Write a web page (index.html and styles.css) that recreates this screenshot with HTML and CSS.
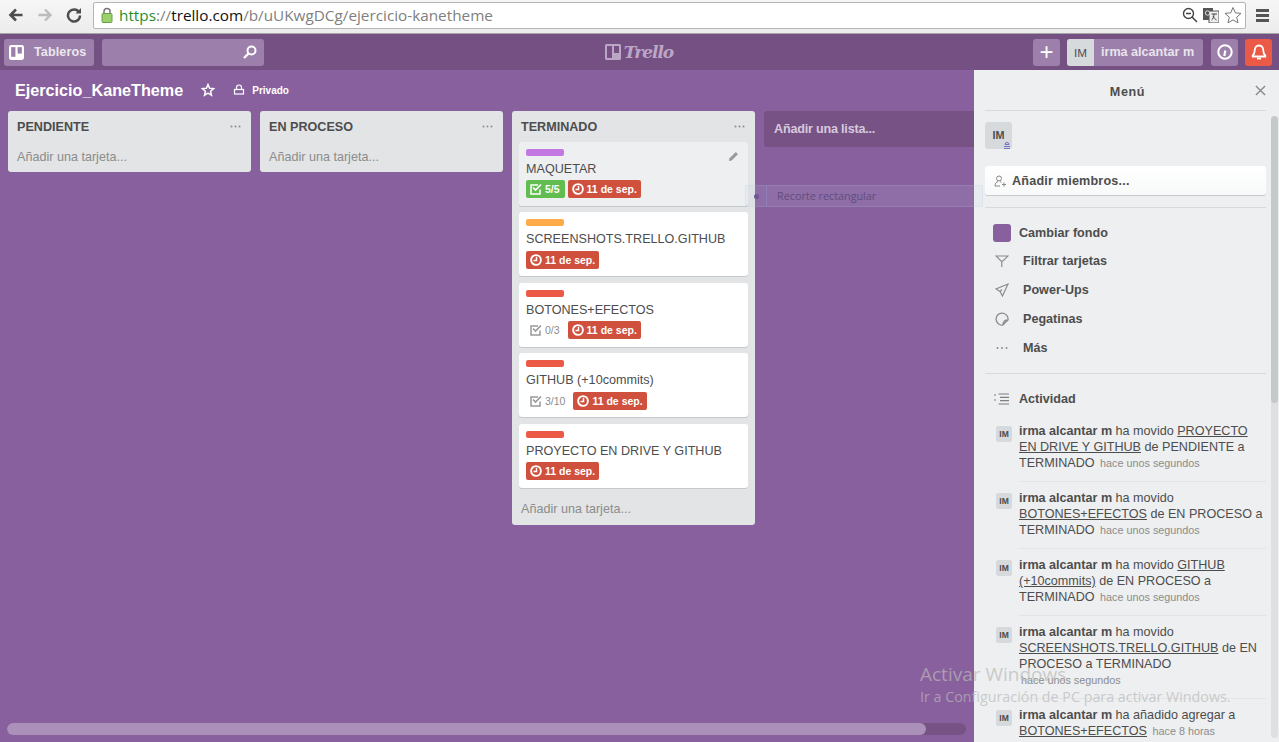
FILE: index.html
```html
<!DOCTYPE html>
<html lang="en">
<head>
  <meta charset="UTF-8">
  <title>Ejercicio_KaneTheme en Trello</title>
  <link rel="stylesheet" href="styles.css">
</head>
<body>
  <div class="browser-bar">
    <svg class="nav-icon" viewBox="0 0 16 16"><path d="M14.5 8H3M8 2.5 2.5 8 8 13.5" fill="none" stroke="#4d4d4d" stroke-width="2.6"/></svg>
    <svg class="nav-icon" viewBox="0 0 16 16"><path d="M1.5 8H13M8 2.5 13.5 8 8 13.5" fill="none" stroke="#bcbcbc" stroke-width="2.4"/></svg>
    <svg class="nav-icon" viewBox="0 0 16 16"><path d="M13 5.2A6 6 0 1 0 14 8.5" fill="none" stroke="#4d4d4d" stroke-width="2.5"/><path d="M9.5 6.5H15V1z" fill="#4d4d4d"/></svg>
    <div class="address">
      <svg class="lock" viewBox="0 0 12 16"><path d="M3 7V4.5a3 3 0 0 1 6 0V7" fill="none" stroke="#777" stroke-width="1.5"/><rect x="1" y="6.5" width="10" height="9" rx="1" fill="#9bd169" stroke="#6c9c45"/></svg>
      <span class="url"><span class="url-scheme">https</span><span class="url-dim">://</span>trello.com<span class="url-dim">/b/uUKwgDCg/ejercicio-kanetheme</span></span>
      <svg class="addr-icon" viewBox="0 0 16 16"><circle cx="6.5" cy="6.5" r="5" fill="none" stroke="#444" stroke-width="1.4"/><path d="M4 6.5h5M10 10l5 5" fill="none" stroke="#444" stroke-width="1.5"/></svg>
      <svg class="addr-icon" viewBox="0 0 16 16"><rect x="0" y="1" width="10" height="12" fill="#555"/><rect x="6" y="4" width="10" height="12" fill="#eee" stroke="#555"/><path d="M8.5 7h5.500M11 7c0 3-1 5-2.500 6M10 9c1 2 2 3 3.500 4" fill="none" stroke="#444"/><circle cx="4.5" cy="6" r="2.2" fill="none" stroke="#ddd"/></svg>
      <svg class="addr-star" viewBox="0 0 18 18"><path d="M9 1.5 11.3 6.8 17 7.400 12.700 11.200 14 16.800 9 13.900 4 16.800 5.300 11.200 1 7.400 6.700 6.800z" fill="#fff" stroke="#777"/></svg>
    </div>
    <div class="hamburger"><span></span><span></span><span></span></div>
  </div>

  <header class="app-header">
    <button class="head-btn boards-btn">
      <svg class="boards-icon" viewBox="0 0 14 14"><rect width="14" height="14" rx="2" fill="#fff"/><rect x="2" y="2" width="4" height="9" fill="#9c80ab"/><rect x="8" y="2" width="4" height="6" fill="#9c80ab"/></svg>
      Tableros
    </button>
    <div class="search">
      <svg class="search-icon" viewBox="0 0 14 14"><circle cx="8.5" cy="5.5" r="4" fill="none" stroke="#fff" stroke-width="2"/><path d="M5.5 8.5 1 13" stroke="#fff" stroke-width="2.4"/></svg>
    </div>
    <div class="logo">
      <svg class="logo-icon" viewBox="0 0 16 16"><rect width="16" height="16" rx="1.5" fill="#bba6c6"/><rect x="2" y="2" width="5" height="12" fill="#755083"/><rect x="9" y="2" width="5" height="7" fill="#755083"/></svg>
      <span class="logo-text">Trello</span>
    </div>
    <button class="head-btn square-btn plus-btn">+</button>
    <div class="head-btn user-btn"><span class="user-avatar">IM</span><span class="user-name">irma alcantar m</span></div>
    <button class="head-btn square-btn">
      <svg class="head-icon" viewBox="0 0 16 16"><circle cx="8" cy="8" r="6.7" fill="none" stroke="#fff" stroke-width="2"/><path d="M8.800 3.800h.1M8.300 6.500 7.300 12" stroke="#fff" stroke-width="2.2" fill="none"/></svg>
    </button>
    <button class="head-btn square-btn bell-btn">
      <svg class="head-icon" viewBox="0 0 16 16"><path d="M8 1.500c-3 0-4.300 2.200-4.300 5 0 2.500-.7 3.700-2 5v1h12.600v-1c-1.300-1.300-2-2.500-2-5 0-2.800-1.300-5-4.300-5z" fill="none" stroke="#fff" stroke-width="1.8"/><path d="M6 14.500h4" stroke="#fff" stroke-width="1.8"/></svg>
    </button>
  </header>

  <div class="workspace">
    <main class="board">
      <div class="board-head">
        <h1 class="board-title">Ejercicio_KaneTheme</h1>
        <svg class="star-icon" viewBox="0 0 14 14"><path d="M7 1.500 8.600 5.200 12.700 5.600 9.600 8.300 10.500 12.300 7 10.200 3.500 12.300 4.400 8.300 1.300 5.600 5.400 5.200z" fill="none" stroke="#fff" stroke-width="1.5"/></svg>
        <svg class="lock-icon" viewBox="0 0 12 12"><path d="M3.500 5V3.500a2.500 2.500 0 0 1 5 0V5" fill="none" stroke="#fff" stroke-width="1.2"/><rect x="1.5" y="5.5" width="9" height="4.5" fill="none" stroke="#fff" stroke-width="1.2"/></svg>
        <span class="privacy">Privado</span>
      </div>

      <div class="lists">
        <section class="list">
          <div class="list-head"><h2>PENDIENTE</h2><svg class="dots" viewBox="0 0 11 3"><circle cx="1.5" cy="1.5" r="1"/><circle cx="5.5" cy="1.5" r="1"/><circle cx="9.5" cy="1.5" r="1"/></svg></div>
          <div class="add-card">Añadir una tarjeta...</div>
        </section>

        <section class="list">
          <div class="list-head"><h2>EN PROCESO</h2><svg class="dots" viewBox="0 0 11 3"><circle cx="1.5" cy="1.5" r="1"/><circle cx="5.5" cy="1.5" r="1"/><circle cx="9.5" cy="1.5" r="1"/></svg></div>
          <div class="add-card">Añadir una tarjeta...</div>
        </section>

        <section class="list">
          <div class="list-head"><h2>TERMINADO</h2><svg class="dots" viewBox="0 0 11 3"><circle cx="1.5" cy="1.5" r="1"/><circle cx="5.5" cy="1.5" r="1"/><circle cx="9.5" cy="1.5" r="1"/></svg></div>

          <article class="card card-hover">
            <div class="label label-purple"></div>
            <svg class="pencil" viewBox="0 0 12 12"><path d="M1 11l.7-3L8.500 1.200l2.300 2.300L4 10.300z" fill="#999"/></svg>
            <div class="card-title">MAQUETAR</div>
            <div class="badges">
              <span class="badge badge-green"><svg class="badge-icon" viewBox="0 0 12 12"><path d="M10 6.500V11H1V2h7" fill="none" stroke="#fff" stroke-width="1.5"/><path d="M3 4.500l2.500 2.500L11 1.500" fill="none" stroke="#fff" stroke-width="1.7"/></svg>5/5</span>
              <span class="badge badge-red"><svg class="badge-icon" viewBox="0 0 12 12"><circle cx="6" cy="6" r="4.900" fill="none" stroke="#fff" stroke-width="1.900"/><path d="M6.500 2.800V6.500H3.500" fill="none" stroke="#fff" stroke-width="1.500"/></svg>11 de sep.</span>
            </div>
          </article>

          <article class="card">
            <div class="label label-orange"></div>
            <div class="card-title">SCREENSHOTS.TRELLO.GITHUB</div>
            <div class="badges">
              <span class="badge badge-red"><svg class="badge-icon" viewBox="0 0 12 12"><circle cx="6" cy="6" r="4.900" fill="none" stroke="#fff" stroke-width="1.900"/><path d="M6.500 2.800V6.500H3.500" fill="none" stroke="#fff" stroke-width="1.500"/></svg>11 de sep.</span>
            </div>
          </article>

          <article class="card">
            <div class="label label-red"></div>
            <div class="card-title">BOTONES+EFECTOS</div>
            <div class="badges">
              <span class="badge badge-plain"><svg class="badge-icon" viewBox="0 0 12 12"><path d="M10 6.500V11H1V2h7" fill="none" stroke="#999" stroke-width="1.5"/><path d="M3 4.500l2.500 2.500L11 1.500" fill="none" stroke="#999" stroke-width="1.7"/></svg>0/3</span>
              <span class="badge badge-red"><svg class="badge-icon" viewBox="0 0 12 12"><circle cx="6" cy="6" r="4.900" fill="none" stroke="#fff" stroke-width="1.900"/><path d="M6.500 2.800V6.500H3.500" fill="none" stroke="#fff" stroke-width="1.500"/></svg>11 de sep.</span>
            </div>
          </article>

          <article class="card">
            <div class="label label-red"></div>
            <div class="card-title">GITHUB (+10commits)</div>
            <div class="badges">
              <span class="badge badge-plain"><svg class="badge-icon" viewBox="0 0 12 12"><path d="M10 6.500V11H1V2h7" fill="none" stroke="#999" stroke-width="1.5"/><path d="M3 4.500l2.500 2.500L11 1.500" fill="none" stroke="#999" stroke-width="1.7"/></svg>3/10</span>
              <span class="badge badge-red"><svg class="badge-icon" viewBox="0 0 12 12"><circle cx="6" cy="6" r="4.900" fill="none" stroke="#fff" stroke-width="1.900"/><path d="M6.500 2.800V6.500H3.500" fill="none" stroke="#fff" stroke-width="1.500"/></svg>11 de sep.</span>
            </div>
          </article>

          <article class="card">
            <div class="label label-red"></div>
            <div class="card-title">PROYECTO EN DRIVE Y GITHUB</div>
            <div class="badges">
              <span class="badge badge-red"><svg class="badge-icon" viewBox="0 0 12 12"><circle cx="6" cy="6" r="4.900" fill="none" stroke="#fff" stroke-width="1.900"/><path d="M6.500 2.800V6.500H3.500" fill="none" stroke="#fff" stroke-width="1.500"/></svg>11 de sep.</span>
            </div>
          </article>

          <div class="add-card">Añadir una tarjeta...</div>
        </section>

        <div class="add-list">Añadir una lista...</div>
      </div>

      <div class="board-scroll"><div class="board-scroll-thumb"></div></div>
    </main>

    <aside class="menu">
      <div class="menu-head">
        <span class="menu-title">Menú</span>
        <svg class="menu-close" viewBox="0 0 12 12"><path d="M1 1l10 10M11 1 1 11" stroke="#8c8c8c" stroke-width="1.6"/></svg>
      </div>
      <div class="menu-scrollbar"><div class="menu-scrollbar-thumb"></div></div>

      <div class="member">
        IM
        <svg class="member-mark" viewBox="0 0 8 8"><path d="M2 3.500a2 2 0 0 1 4 0zM1 5.500h6M1 7.500h6" fill="none" stroke="#6f73c9"/></svg>
      </div>
      <button class="add-members">
        <svg class="add-members-icon" viewBox="0 0 12 12"><circle cx="5" cy="3.500" r="2.500" fill="none" stroke="#888"/><path d="M1 11c0-3 1.500-4 3-4.500M6 6.500c.5.200 1 .5 1.500 1M1 11h5M8 9.500h4M10 7.500v4" fill="none" stroke="#888"/></svg>
        Añadir miembros...
      </button>

      <nav class="menu-nav">
        <div class="menu-row menu-row-bg"><span class="swatch"></span>Cambiar fondo</div>
        <div class="menu-row"><svg class="menu-icon" viewBox="0 0 14 14"><path d="M1 2h12L8 7H6zM6.800 7v6" fill="none" stroke="#8c8c8c" stroke-width="1.2"/></svg>Filtrar tarjetas</div>
        <div class="menu-row"><svg class="menu-icon" viewBox="0 0 14 14"><path d="M13 1 1 6l4 2.500L7.500 13zM5 8.500l2-2" fill="none" stroke="#8c8c8c" stroke-width="1.2"/></svg>Power-Ups</div>
        <div class="menu-row"><svg class="menu-icon" viewBox="0 0 14 14"><path d="M8 13a6 6 0 1 1 5-5zM8 13c0-3 2-5 5-5" fill="none" stroke="#8c8c8c" stroke-width="1.3"/></svg>Pegatinas</div>
        <div class="menu-row"><svg class="menu-icon" viewBox="0 0 14 14"><circle cx="2.500" cy="7" r="1" fill="#8c8c8c"/><circle cx="7" cy="7" r="1" fill="#8c8c8c"/><circle cx="11.500" cy="7" r="1" fill="#8c8c8c"/></svg>Más</div>
      </nav>

      <div class="activity-head">
        <svg class="activity-icon" viewBox="0 0 15 12"><path d="M4.500 1H15M6 4.300h9M6 7.700h9M4.500 11H15M0 2h2M0 7h2" stroke="#7f7f7f" stroke-width="1.2"/></svg>
        Actividad
      </div>

      <div class="activity">
        <div class="action">
          <span class="action-avatar">IM</span>
          <p class="action-text"><b>irma alcantar m</b> ha movido <a>PROYECTO EN DRIVE Y GITHUB</a> de PENDIENTE a TERMINADO <small>hace unos segundos</small></p>
        </div>
        <div class="action">
          <span class="action-avatar">IM</span>
          <p class="action-text"><b>irma alcantar m</b> ha movido <a>BOTONES+EFECTOS</a> de EN PROCESO a TERMINADO <small>hace unos segundos</small></p>
        </div>
        <div class="action">
          <span class="action-avatar">IM</span>
          <p class="action-text"><b>irma alcantar m</b> ha movido <a>GITHUB (+10commits)</a> de EN PROCESO a TERMINADO <small>hace unos segundos</small></p>
        </div>
        <div class="action">
          <span class="action-avatar">IM</span>
          <p class="action-text"><b>irma alcantar m</b> ha movido <a>SCREENSHOTS.TRELLO.GITHUB</a> de EN PROCESO a TERMINADO <small>hace unos segundos</small></p>
        </div>
        <div class="action">
          <span class="action-avatar">IM</span>
          <p class="action-text"><b>irma alcantar m</b> ha añadido agregar a <a>BOTONES+EFECTOS</a> <small>hace 8 horas</small></p>
        </div>
      </div>
    </aside>
  </div>

  <div class="snip-tip">
    <span class="snip-dot"><span></span></span>
    <span class="snip-text">Recorte rectangular</span>
  </div>

  <div class="watermark">
    <div class="watermark-big">Activar Windows</div>
    <div class="watermark-small">Ir a Configuración de PC para activar Windows.</div>
  </div>
</body>
</html>
```

FILE: styles.css
```css
* {
  box-sizing: border-box;
}
html, body {
  height: 100%;
}
body {
  margin: 0;
  display: flex;
  flex-direction: column;
  overflow: hidden;
  font-family: "Liberation Sans", Arial, sans-serif;
  font-size: 12.6px;
  line-height: 16px;
  color: #4d4d4d;
  background-color: #89609e;
}
button {
  font-family: inherit;
  border: none;
  padding: 0;
}
h1, h2, p {
  margin: 0;
}

/* browser chrome */
.browser-bar {
  flex: 0 0 34px;
  display: flex;
  align-items: center;
  padding: 0 10px 3px 8px;
  background: linear-gradient(#f6f6f6, #ececec);
  border-bottom: 1px solid #a5a5a5;
}
.nav-icon {
  width: 16px;
  height: 16px;
  margin-right: 13px;
}
.address {
  flex: 1;
  height: 27px;
  margin-left: -2px;
  display: flex;
  align-items: center;
  padding: 0 3px 0 7px;
  background-color: white;
  border: 1px solid #b4b4b4;
  border-radius: 2px;
}
.lock {
  width: 12px;
  height: 16px;
  margin-right: 6px;
}
.url {
  flex: 1;
  font-family: "Open Sans", sans-serif;
  font-size: 15.3px;
  color: #111;
}
.url-scheme {
  color: #1e8f2d;
}
.url-dim {
  color: #808080;
}
.addr-icon {
  width: 16px;
  height: 16px;
  margin-right: 5px;
}
.addr-star {
  width: 18px;
  height: 18px;
}
.hamburger {
  width: 13px;
  margin-left: 10px;
  display: flex;
  flex-direction: column;
  gap: 2px;
}
.hamburger span {
  height: 3px;
  background-color: #555;
}

/* app header */
.app-header {
  flex: 0 0 36px;
  display: flex;
  align-items: center;
  padding: 0 7px 0 4px;
  background-color: #755083;
}
.head-btn {
  height: 27px;
  display: flex;
  align-items: center;
  justify-content: center;
  color: white;
  font-weight: bold;
  font-size: 12.6px;
  background-color: #9c80ab;
  border-radius: 3px;
}
.boards-btn {
  width: 90px;
  justify-content: flex-start;
  gap: 10px;
  padding-left: 5px;
  letter-spacing: 0.1px;
  color: #ece6ef;
}
.boards-icon {
  width: 15px;
  height: 15px;
}
.search {
  width: 162px;
  height: 27px;
  margin-left: 8px;
  display: flex;
  align-items: center;
  justify-content: flex-end;
  padding-right: 7px;
  background-color: #9c80ab;
  border-radius: 3px;
}
.search-icon {
  width: 14px;
  height: 14px;
}
.logo {
  flex: 1;
  display: flex;
  align-items: center;
  justify-content: center;
  gap: 3px;
  padding-right: 12px;
}
.logo-icon {
  width: 16px;
  height: 16px;
}
.logo-text {
  font-family: "DejaVu Serif", serif;
  font-style: italic;
  font-weight: bold;
  font-size: 17px;
  letter-spacing: -1px;
  color: #bba6c6;
}
.square-btn {
  width: 27px;
  margin-left: 7px;
}
.plus-btn {
  font-size: 24px;
  font-weight: normal;
}
.user-btn {
  width: 136px;
  margin: 0 1px 0 7px;
  justify-content: flex-start;
  overflow: hidden;
  color: #e9e3ec;
}
.user-avatar {
  width: 27px;
  height: 27px;
  line-height: 27px;
  text-align: center;
  font-size: 11.7px;
  font-weight: normal;
  color: #4d4d4d;
  background-color: #d6dadc;
}
.user-name {
  margin-left: 7px;
}
.bell-btn {
  background-color: #eb5a46;
}
.head-icon {
  width: 16px;
  height: 16px;
}

/* board */
.workspace {
  flex: 1;
  display: flex;
  min-height: 0;
}
.board {
  flex: 1;
  min-width: 0;
  display: flex;
  flex-direction: column;
  overflow: hidden;
  padding: 0 0 7px 0;
}
.board-head {
  flex: 0 0 41px;
  display: flex;
  align-items: center;
  padding: 0 0 2px 15px;
  color: white;
}
.board-title {
  font-size: 16.2px;
  font-weight: bold;
}
.star-icon {
  width: 14px;
  height: 14px;
  margin-left: 18px;
}
.lock-icon {
  width: 12px;
  height: 12px;
  margin-left: 18px;
}
.privacy {
  margin: 2px 0 0 7px;
  font-size: 10px;
  font-weight: bold;
}
.lists {
  flex: 1;
  display: flex;
  align-items: flex-start;
  gap: 9px;
  padding-left: 8px;
}
.list {
  flex: 0 0 243px;
  background-color: #e2e4e6;
  border-radius: 3px;
}
.list-head {
  height: 30.9px;
  display: flex;
  align-items: center;
  justify-content: space-between;
  padding: 0 10px 0 9px;
}
.list-head h2 {
  margin-top: 2px;
  font-size: 12.6px;
  font-weight: bold;
  color: #4d4d4d;
}
.dots {
  width: 11px;
  height: 3px;
  fill: #8c8c8c;
}
.add-card {
  height: 30.5px;
  padding: 7px 9px;
  color: #8c8c8c;
}
.card {
  position: relative;
  height: 64px;
  margin: 0 7px 6.5px;
  padding: 7px 7px 0;
  background-color: white;
  border-radius: 3px;
  box-shadow: 0 1px 0 #c4c9cc;
}
.card-hover {
  background-color: #edeff0;
}
.label {
  width: 38px;
  height: 7px;
  border-radius: 2px;
}
.label-purple {
  background-color: #c377e0;
}
.label-orange {
  background-color: #ffab4a;
}
.label-red {
  background-color: #eb5a46;
}
.card-title {
  margin-top: 5px;
}
.pencil {
  position: absolute;
  top: 9px;
  right: 9px;
  width: 11px;
  height: 11px;
}
.badges {
  display: flex;
  gap: 3px;
  margin-top: 3.4px;
}
.badge {
  height: 18px;
  display: flex;
  align-items: center;
  gap: 3px;
  padding: 0 4px;
  font-size: 10.5px;
  font-weight: bold;
  color: white;
  border-radius: 2px;
}
.badge-icon {
  width: 12px;
  height: 12px;
}
.badge-green {
  padding-right: 5px;
  background-color: #61bd4f;
}
.badge-red {
  background-color: #cf513d;
}
.badge-plain {
  padding-right: 5px;
  font-weight: normal;
  color: #8c8c8c;
}
.add-list {
  flex: 0 0 243px;
  height: 36px;
  padding: 10px 10px;
  color: #d6c9dd;
  font-weight: bold;
  letter-spacing: -0.2px;
  background-color: #775285;
  border-radius: 3px;
}
.board-scroll {
  height: 12px;
  margin: 0 8px 0 7px;
  background-color: #775285;
  border-radius: 6px;
}
.board-scroll-thumb {
  width: 919px;
  height: 12px;
  background-color: #ab90ba;
  border-radius: 6px;
}

/* side menu */
.menu {
  position: relative;
  flex: 0 0 305px;
  padding: 0 13px 0 11px;
  overflow: hidden;
  background-color: #edeff0;
}
.menu-head {
  position: relative;
  height: 41px;
  display: flex;
  align-items: center;
  justify-content: center;
  padding: 4px 0 0 4px;
  border-bottom: 1px solid #d6dadc;
}
.menu-title {
  font-size: 12.6px;
  font-weight: bold;
  letter-spacing: 0.6px;
}
.menu-close {
  position: absolute;
  right: 0;
  top: 15px;
  width: 11px;
  height: 11px;
}
.menu-scrollbar {
  position: absolute;
  top: 46px;
  right: 1px;
  width: 7px;
  height: 622px;
  background-color: #dee1e3;
  border-radius: 4px;
}
.menu-scrollbar-thumb {
  height: 287px;
  background-color: #c4c9cc;
  border-radius: 4px;
}
.member {
  position: relative;
  width: 27px;
  height: 27px;
  margin-top: 11px;
  line-height: 27px;
  text-align: center;
  font-size: 10.8px;
  font-weight: bold;
  background-color: #d6dadc;
  border-radius: 3px;
}
.member-mark {
  position: absolute;
  right: 1px;
  bottom: 0;
  width: 8px;
  height: 8px;
}
.add-members {
  width: 281px;
  height: 29px;
  margin-top: 17px;
  display: flex;
  align-items: center;
  gap: 6px;
  padding-left: 9px;
  font-size: 12.6px;
  font-weight: bold;
  letter-spacing: 0.2px;
  color: #4d4d4d;
  background: linear-gradient(#fff, #f8f9f9);
  border-radius: 3px;
  box-shadow: 0 1px 0 #c4c9cc;
}
.add-members-icon {
  width: 12px;
  height: 12px;
}
.menu-nav {
  width: 281px;
  margin-top: 12px;
  padding: 11px 0 11px 8px;
  border-top: 1px solid #d6dadc;
  border-bottom: 1px solid #d6dadc;
}
.menu-row {
  height: 29px;
  display: flex;
  align-items: center;
  gap: 14px;
  font-weight: bold;
  padding-left: 2px;
}
.menu-row-bg {
  height: 27px;
  gap: 8px;
  padding-left: 0;
}
.swatch {
  width: 18px;
  height: 18px;
  background-color: #89609e;
  border-radius: 3px;
}
.menu-icon {
  width: 14px;
  height: 14px;
}
.activity-head {
  height: 16px;
  margin: 17px 0 0 9px;
  display: flex;
  align-items: center;
  gap: 10px;
  font-weight: bold;
}
.activity-icon {
  width: 15px;
  height: 12px;
}
.activity {
  margin-top: 16px;
  width: 281px;
}
.action {
  position: relative;
  padding: 0 0 11px 34px;
  margin-bottom: 8px;
  min-height: 16px;
}
.action::after {
  content: "";
  position: absolute;
  left: 34px;
  right: 0;
  bottom: 0;
  border-bottom: 1px solid #e2e4e6;
}
.action-avatar {
  position: absolute;
  left: 11px;
  top: 3px;
  width: 16px;
  height: 16px;
  line-height: 16px;
  text-align: center;
  font-size: 8.5px;
  font-weight: bold;
  background-color: #d6dadc;
  border-radius: 2px;
}
.action-text a {
  text-decoration: underline;
}
.action-text small {
  font-size: 10.8px;
  color: #8c8c8c;
  margin-left: 2px;
  white-space: nowrap;
}

/* overlays from the screen capture */
.snip-tip {
  position: absolute;
  left: 745px;
  top: 185px;
  width: 238px;
  height: 22px;
  display: flex;
  align-items: center;
  background-color: rgba(190, 205, 230, 0.12);
  border: 1px solid rgba(170, 200, 235, 0.2);
}
.snip-dot {
  width: 21px;
  height: 100%;
  display: flex;
  align-items: center;
  justify-content: center;
  border-right: 1px solid rgba(140, 170, 225, 0.3);
}
.snip-dot span {
  width: 5px;
  height: 5px;
  background-color: #6f5690;
  border-radius: 50%;
}
.snip-text {
  margin-left: 10px;
  font-family: "Open Sans", sans-serif;
  font-size: 10.8px;
  color: #5f4d80;
}
.watermark {
  position: absolute;
  left: 920px;
  top: 662px;
  color: rgba(185, 185, 185, 0.7);
  font-family: "Open Sans", sans-serif;
  pointer-events: none;
}
.watermark-big {
  font-size: 19px;
  line-height: 24px;
}
.watermark-small {
  font-size: 14.3px;
  line-height: 21px;
}
```
